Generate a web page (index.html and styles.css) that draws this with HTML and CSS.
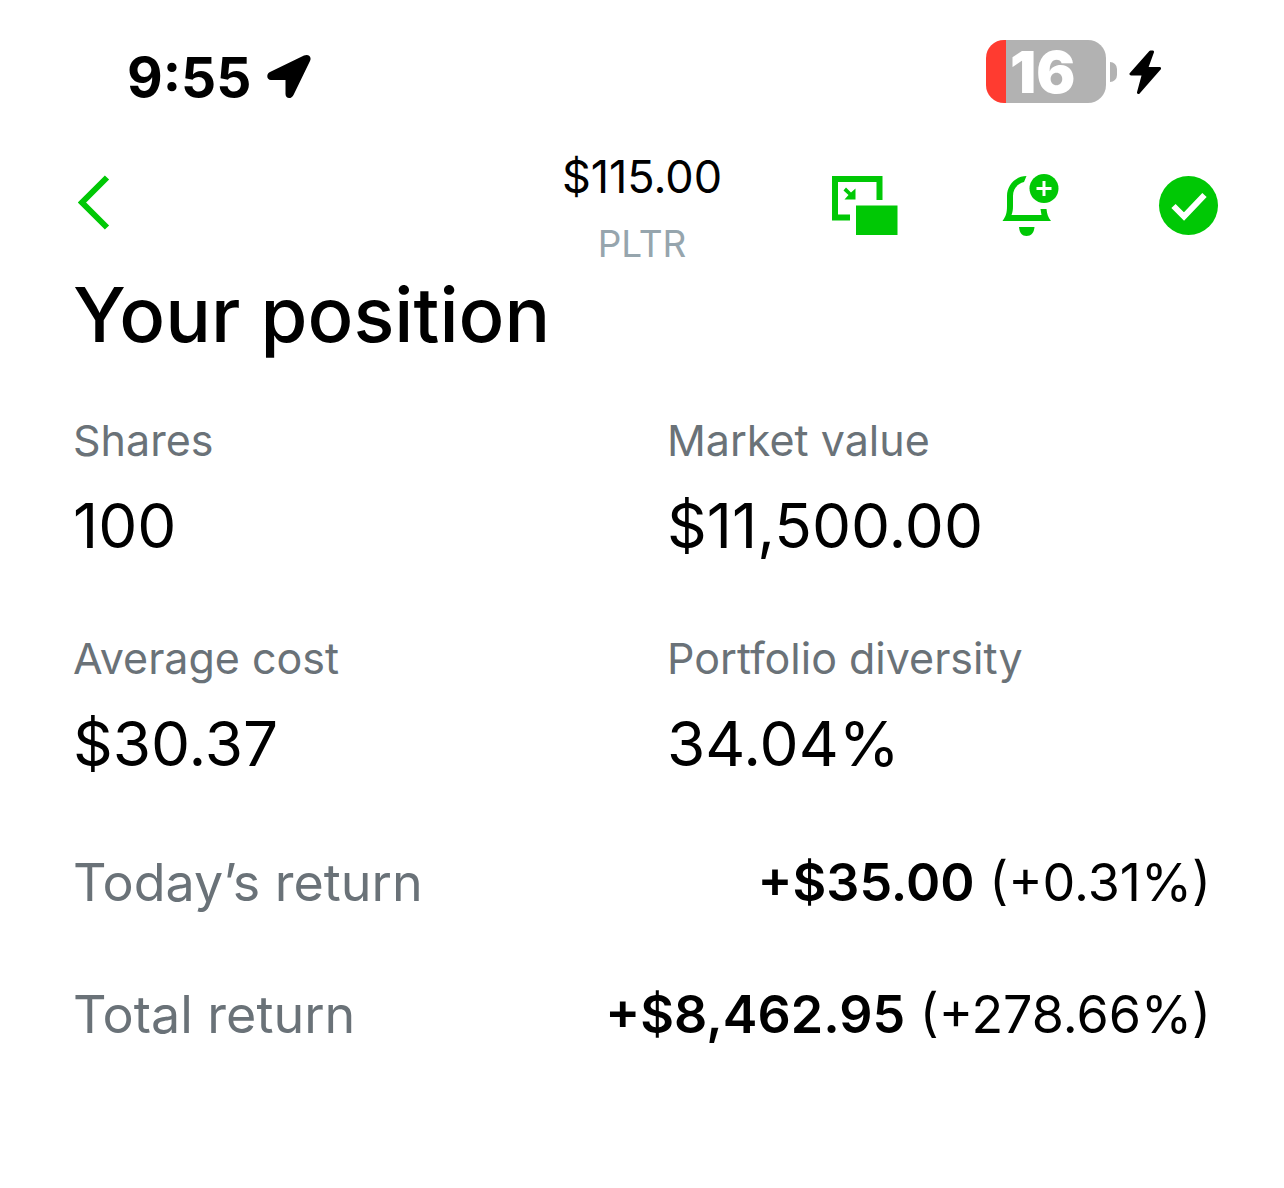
FILE: index.html
```
<!DOCTYPE html>
<html lang="en">

<head>
    <meta charset="utf-8">
    <meta name="viewport" content="width=device-width, initial-scale=1">
    <title>PLTR position</title>
    <link rel="stylesheet" href="styles.css">
</head>

<body>
    <div class="status_bar">
        <div class="status_time">
            <span>9:55</span>
            <svg width="46" height="46" viewBox="0 0 46 46" aria-hidden="true">
                <path d="M4 18L38 1.500C42.500-.5 46 3 44 7L27.500 41C25.500 45.500 19.500 45 19.500 40V26H5C.5 26 0 20 4 18Z"/>
            </svg>
        </div>
        <div class="status_power">
            <div class="battery">16</div>
            <div class="battery_cap"></div>
            <svg class="bolt" width="32" height="46" viewBox="0 0 32 46" aria-hidden="true">
                <path d="M21.500 3L2 25H14.500L9.500 43.500L30.500 19.500H17.500L23.500 3Z" stroke="#000" stroke-width="3" stroke-linejoin="round"/>
            </svg>
        </div>
    </div>

    <header class="nav_bar">
        <button class="icon_button back_button" aria-label="Back">
            <svg width="32" height="56" viewBox="0 0 32 56">
                <path d="M29 2.500L4 27.500L29 52.500" fill="none" stroke="#00c805" stroke-width="6"/>
            </svg>
        </button>
        <div class="quote">
            <div class="quote_price">$115.00</div>
            <div class="quote_symbol">PLTR</div>
        </div>
        <div class="nav_actions">
            <button class="icon_button" aria-label="Picture in picture">
                <svg width="66" height="60" viewBox="0 0 66 60" fill="#00c805">
                    <path d="M0 0H50.500V24H44.500V6H6V38.500H18V44.500H0Z"/>
                    <path d="M24 29.500H65.500V59H24Z"/>
                    <path d="M14 11.500L19 16.500L23.500 12.500V23.500H12.500L16.500 19L11.500 14.500Z"/>
                </svg>
            </button>
            <button class="icon_button" aria-label="Add alert">
                <svg width="66" height="62" viewBox="-7 -2 66 62" fill="#00c805">
                    <path d="M24.500 0C14 0 5 9 5 20V30C5 37 4 40 .5 45H49C46 41 45 38 44.500 33H38.500L39.500 39H9.500C10.500 36 11 34 11 30V20C11 13 15 8 22 6Z"/>
                    <path d="M17 51H32.500C32 57 29 60 24.500 60S17.500 57 17 51Z"/>
                    <circle cx="42" cy="12.500" r="17.500" fill="#fff"/>
                    <circle cx="42" cy="12.500" r="14.500"/>
                    <path d="M42 5V20M34.500 12.500H49.500" stroke="#fff" stroke-width="3"/>
                </svg>
            </button>
            <button class="icon_button" aria-label="Following">
                <svg width="60" height="60" viewBox="0 0 60 60">
                    <circle cx="30.500" cy="29.500" r="29.500" fill="#00c805"/>
                    <path d="M15.500 30L26 40.500L46.500 19" fill="none" stroke="#fff" stroke-width="6"/>
                </svg>
            </button>
        </div>
    </header>

    <main class="position">
        <h1 class="title">Your position</h1>

        <dl class="stats">
            <div class="stat">
                <dt>Shares</dt>
                <dd>100</dd>
            </div>
            <div class="stat">
                <dt>Market value</dt>
                <dd>$11,500.00</dd>
            </div>
            <div class="stat">
                <dt>Average cost</dt>
                <dd>$30.37</dd>
            </div>
            <div class="stat">
                <dt>Portfolio diversity</dt>
                <dd>34.04%</dd>
            </div>
        </dl>

        <dl class="returns">
            <div class="return_row">
                <dt>Today’s return</dt>
                <dd><b>+$35.00</b> (+0.31%)</dd>
            </div>
            <div class="return_row">
                <dt>Total return</dt>
                <dd><b>+$8,462.95</b> (+278.66%)</dd>
            </div>
        </dl>
    </main>
</body>

</html>
```
FILE: styles.css
```
* {
    box-sizing: border-box;
}

body {
    margin: 0;
    background: #fff;
    color: #000;
    font-family: "Inter", "Liberation Sans", sans-serif;
}

dl,
dd {
    margin: 0;
}

.status_bar {
    display: flex;
    justify-content: space-between;
    align-items: flex-start;
    height: 148px;
    padding: 40px 123px 0 127px;
}

.status_time {
    display: flex;
    align-items: center;
    gap: 15px;
    padding-top: 4px;
    font-size: 55px;
    line-height: 66px;
    font-weight: 700;
}

.status_power {
    display: flex;
    align-items: center;
}

.battery {
    width: 120px;
    height: 63px;
    padding-left: 24px;
    border-radius: 18px;
    background: linear-gradient(to right, #ff3b30 20px, #b2b2b2 20px);
    color: #fff;
    font-size: 58px;
    line-height: 64px;
    font-weight: 900;
}

.battery_cap {
    width: 7px;
    height: 20px;
    margin-left: 4px;
    border-radius: 0 10px 10px 0;
    background: #b2b2b2;
}

.bolt {
    margin-left: 12px;
}

.nav_bar {
    display: grid;
    grid-template-columns: 1fr auto 1fr;
    align-items: start;
    padding: 0 66px;
}

.icon_button {
    padding: 0;
    border: none;
    background: none;
    cursor: pointer;
}

.icon_button svg {
    display: block;
}

.back_button {
    justify-self: start;
    padding: 27px 0 0 12px;
}

.quote {
    text-align: center;
}

.quote_price {
    font-size: 45px;
    line-height: 58px;
}

.quote_symbol {
    margin-top: 14px;
    color: #96a5ad;
    font-size: 37px;
    line-height: 48px;
}

.nav_actions {
    display: flex;
    justify-content: flex-end;
    align-items: flex-end;
    gap: 97px;
    padding-top: 26px;
}

.position {
    padding: 0 73px;
}

.title {
    margin: 0;
    font-size: 76px;
    line-height: 92px;
    font-weight: 500;
}

.stats {
    display: grid;
    grid-template-columns: 1fr 1fr;
    column-gap: 50px;
    row-gap: 66px;
    margin-top: 52px;
}

.stat dt {
    color: #6a7278;
    font-size: 43px;
    line-height: 56px;
}

.stat dd {
    margin-top: 20px;
    font-size: 62px;
    line-height: 76px;
}

.returns {
    display: grid;
    gap: 66px;
    margin-top: 68px;
}

.return_row {
    display: flex;
    justify-content: space-between;
    font-size: 52px;
    line-height: 66px;
}

.return_row dt {
    color: #6a7278;
}

.return_row b {
    font-weight: 600;
}
```
